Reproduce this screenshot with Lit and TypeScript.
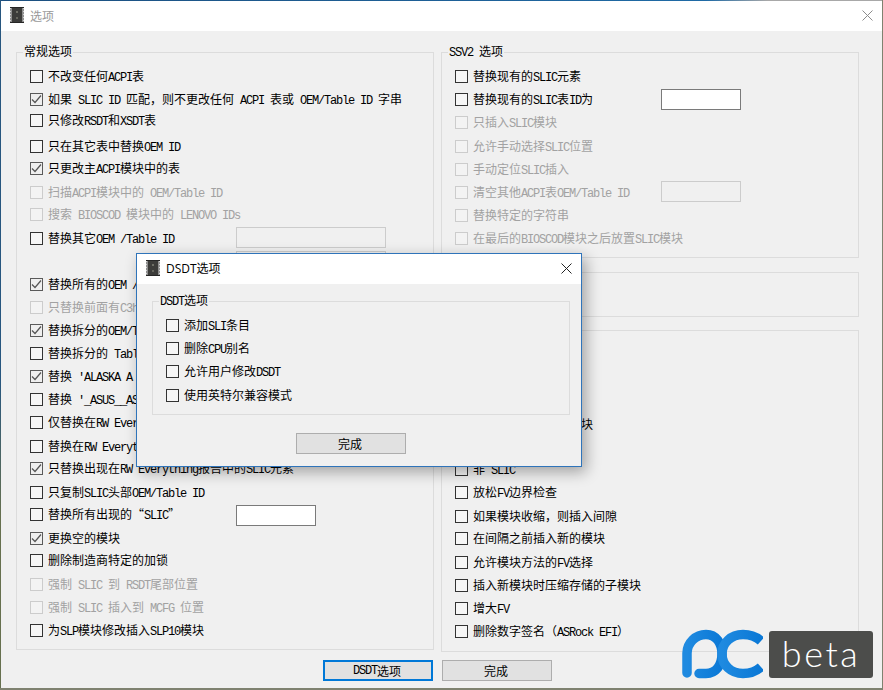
import { LitElement, html, css } from "lit";
import { customElement } from "lit/decorators.js";

type Row = { t: string; top: number; on?: boolean; off?: boolean };

const split = (s: string) =>
  s.split(/([\x20-\x7e]+)/).filter(Boolean).map((p) =>
    /^[\x20-\x7e]+$/.test(p) ? html`<span class="lat">${p}</span>` : html`<span class="cjk">${p}</span>`
  );

const LEFT: Row[] = [
  { t: "不改变任何ACPI表", top: 70 },
  { t: "如果 SLIC ID 匹配，则不更改任何 ACPI 表或 OEM/Table ID 字串", top: 93, on: true },
  { t: "只修改RSDT和XSDT表", top: 114 },
  { t: "只在其它表中替换OEM ID", top: 140 },
  { t: "只更改主ACPI模块中的表", top: 162, on: true },
  { t: "扫描ACPI模块中的 OEM/Table ID", top: 186, off: true },
  { t: "搜索 BIOSCOD 模块中的 LENOVO IDs", top: 208, off: true },
  { t: "替换其它OEM /Table ID", top: 232 },
  { t: "替换所有的OEM /", top: 278, on: true },
  { t: "只替换前面有C3h", top: 301, off: true },
  { t: "替换拆分的OEM/T", top: 324, on: true },
  { t: "替换拆分的 Tabl", top: 347 },
  { t: "替换 'ALASKA A", top: 370, on: true },
  { t: "替换 '_ASUS__AS", top: 393 },
  { t: "仅替换在RW Ever", top: 416 },
  { t: "替换在RW Everyt", top: 440 },
  { t: "只替换出现在RW Everything报告中的SLIC元素", top: 462, on: true },
  { t: "只复制SLIC头部OEM/Table ID", top: 486 },
  { t: "替换所有出现的“SLIC”", top: 508 },
  { t: "更换空的模块", top: 532, on: true },
  { t: "删除制造商特定的加锁", top: 554 },
  { t: "强制 SLIC 到 RSDT尾部位置", top: 578, off: true },
  { t: "强制 SLIC 插入到 MCFG 位置", top: 601, off: true },
  { t: "为SLP模块修改插入SLP10模块", top: 624 },
];

const RIGHT_A: Row[] = [
  { t: "替换现有的SLIC元素", top: 70 },
  { t: "替换现有的SLIC表ID为", top: 93 },
  { t: "只插入SLIC模块", top: 116, off: true },
  { t: "允许手动选择SLIC位置", top: 140, off: true },
  { t: "手动定位SLIC插入", top: 163, off: true },
  { t: "清空其他ACPI表OEM/Table ID", top: 186, off: true },
  { t: "替换特定的字符串", top: 209, off: true },
  { t: "在最后的BIOSCOD模块之后放置SLIC模块", top: 232, off: true },
];

const RIGHT_C: Row[] = [
  { t: "保留压缩存储的子模块", top: 418 },
  { t: "非 SLIC", top: 463 },
  { t: "放松FV边界检查", top: 486 },
  { t: "如果模块收缩，则插入间隙", top: 510 },
  { t: "在间隔之前插入新的模块", top: 532 },
  { t: "允许模块方法的FV选择", top: 556 },
  { t: "插入新模块时压缩存储的子模块", top: 579 },
  { t: "增大FV", top: 602 },
  { t: "删除数字签名（ASRock EFI）", top: 625 },
];

const DLG: Row[] = [
  { t: "添加SLI条目", top: 319 },
  { t: "删除CPU别名", top: 342 },
  { t: "允许用户修改DSDT", top: 365 },
  { t: "使用英特尔兼容模式", top: 389 },
];

const chip = () => html`<svg class="chip" width="16" height="16" viewBox="0 0 16 16" aria-hidden="true">
  <rect x="1" y="0" width="14" height="16" fill="#262626"/>
  <rect x="1" y="1" width="2" height="14" fill="#8f8f8f"/>
  <rect x="13" y="1" width="2" height="14" fill="#8f8f8f"/>
  <path d="M1.500 1v14M14.500 1v14" stroke="#d4d4d4" stroke-width="1" stroke-dasharray="1 2"/>
  <rect x="3" y="1" width="10" height="14" fill="#3c3c3a"/>
  <rect x="7" y="4" width="2" height="2" fill="#6f6f66"/>
  <rect x="7" y="10" width="2" height="2" fill="#66665e"/>
</svg>`;

const x = (c: string) => html`<svg width="11" height="11" viewBox="0 0 11 11" aria-hidden="true">
  <path d="M.5.5l10 10M10.500.5l-10 10" fill="none" stroke="${c}" stroke-width="1"/>
</svg>`;

@customElement("app-root")
export class AppRoot extends LitElement {
  static styles = css`
    :host {
      display: block;
      width: 883px;
      height: 690px;
      overflow: hidden;
      background: #7f8270;
      font-family: "Noto Sans CJK SC", "Liberation Mono", monospace;
      font-size: 12px;
      color: #000;
    }
    .win {
      position: relative;
      width: 882px;
      height: 688px;
      box-sizing: border-box;
      background: #f0f0f0;
      border-left: 1px solid #27567f;
      border-image: linear-gradient(#27567f 55%, #66704f 75%) 1;
      overflow: hidden;
      display: flex;
      flex-direction: column;
    }
    .topline {
      height: 1px;
      flex: none;
      background: linear-gradient(90deg, #1c4f7f, #1f6aa5 80%, #a8a8a8 87%);
    }
    .bar {
      flex: none;
      height: 30px;
      box-sizing: border-box;
      background: #fff;
      display: flex;
      align-items: center;
      padding: 0 9px 2px 8px;
      gap: 5px;
      color: #999;
      font-size: 12px;
    }
    .grow { flex: 1; }
    .chip { flex: none; }
    .group {
      position: absolute;
      box-sizing: border-box;
      border: 1px solid #dcdcdc;
    }
    .legend {
      position: absolute;
      top: -9px;
      left: 6px;
      background: #f0f0f0;
      padding: 0 1px;
      line-height: 14px;
      height: 14px;
      white-space: pre;
    }
    .row {
      position: absolute;
      display: flex;
      align-items: center;
      gap: 5px;
      height: 13px;
      white-space: pre;
    }
    .row .txt { margin-bottom: 2px; }
    .off { color: #a2a2a2; }
    .box {
      flex: none;
      width: 13px;
      height: 13px;
      box-sizing: border-box;
      border: 1px solid #333;
      background: #f6f6f6;
      display: block;
    }
    .box.on { border-color: #5a5a5a; background: #efefef; }
    .off .box { border-color: #ccc; background: #f3f3f3; }
    .check { display: block; }
    .lat {
      font-family: "Liberation Mono", monospace;
      font-size: 12px;
      letter-spacing: -1.2px;
    }
    .field {
      position: absolute;
      box-sizing: border-box;
      border: 1px solid #7a7a7a;
      background: #fff;
    }
    .field.dis { border-color: #ccc; background: #f0f0f0; }
    .btn {
      position: absolute;
      box-sizing: border-box;
      width: 110px;
      height: 21px;
      padding-right: 2px;
      border: 1px solid #adadad;
      background: #e1e1e1;
      display: flex;
      align-items: center;
      justify-content: center;
      white-space: pre;
    }
    .btn.focus { border: 2px solid #0078d7; }
    .dlg {
      position: absolute;
      left: 135px;
      top: 253px;
      width: 446px;
      height: 214px;
      box-sizing: border-box;
      border: 1px solid #2f74ba;
      background: #f0f0f0;
      box-shadow: 4px 5px 14px rgba(0, 0, 0, 0.33);
      display: flex;
      flex-direction: column;
    }
    .dbar {
      flex: none;
      height: 30px;
      box-sizing: border-box;
      background: #fff;
      display: flex;
      align-items: center;
      padding: 0 9px 2px 8px;
      gap: 5px;
      font-family: "Open Sans", "Noto Sans CJK SC", sans-serif;
      color: #000;
    }
    .wm {
      position: absolute;
      left: 680px;
      top: 628px;
      display: flex;
      gap: 6px;
      align-items: flex-start;
    }
    .beta {
      width: 104px;
      height: 47px;
      margin-top: 3px;
      background: #4c4d4b;
      border-radius: 3px;
      color: #fff;
      font-family: Lato, "Open Sans", sans-serif;
      font-weight: 300;
      font-size: 36px;
      line-height: 44px;
      letter-spacing: 2.500px;
      text-align: center;
    }
  `;

  private row(r: Row, left: number, offY = 0) {
    return html`<div class="row ${r.off ? "off" : ""}" style="left:${left}px;top:${r.top - offY}px">
      <span class="box ${r.on ? "on" : ""}">${r.on
        ? html`<svg class="check" width="11" height="11" viewBox="0 0 11 11" aria-hidden="true"><path d="M1 5.500l3 3 6-7" fill="none" stroke="#555" stroke-width="1.200"/></svg>`
        : ""}</span>
      <span class="txt">${split(r.t)}</span>
    </div>`;
  }

  private group(l: number, t: number, w: number, h: number, title = "") {
    return html`<div class="group" style="left:${l - 1}px;top:${t}px;width:${w}px;height:${h}px">
      ${title ? html`<span class="legend">${split(title)}</span>` : ""}
    </div>`;
  }

  private field(l: number, t: number, w: number, dis = false) {
    return html`<div class="field ${dis ? "dis" : ""}" style="left:${l - 1}px;top:${t}px;width:${w}px;height:21px"></div>`;
  }

  private btn(l: number, t: number, label: string, focus = false) {
    return html`<div class="btn ${focus ? "focus" : ""}" style="left:${l}px;top:${t}px">${split(label)}</div>`;
  }

  render() {
    return html`<div class="win">
      <div class="topline"></div>
      <div class="bar">
        ${chip()}<span>选项</span><span class="grow"></span>${x("#8c8c8c")}
      </div>
      ${this.group(16, 52, 418, 598, "常规选项")}
      ${this.group(441, 52, 418, 206, "SSV2 选项")}
      ${this.group(441, 272, 418, 45)}
      ${this.group(441, 330, 418, 322)}
      ${LEFT.map((r) => this.row(r, 29))}
      ${RIGHT_A.map((r) => this.row(r, 454))}
      ${RIGHT_C.map((r) => this.row(r, 454))}
      ${this.field(236, 227, 150, true)}
      ${this.field(236, 251, 150, true)}
      ${this.field(236, 505, 80)}
      ${this.field(661, 89, 80)}
      ${this.field(661, 181, 80, true)}
      ${this.btn(322, 660, "DSDT选项", true)}
      ${this.btn(441, 660, "完成")}

      <div class="dlg">
        <div class="dbar">
          ${chip()}<span>DSDT选项</span><span class="grow"></span>${x("#222")}
        </div>
        ${this.group(16, 47, 418, 114, "DSDT选项")}
        ${DLG.map((r) => this.row(r, 29, 254))}
        ${this.btn(159, 179, "完成")}
      </div>

      <div class="wm">
        <svg width="82" height="52" viewBox="0 0 82 52" aria-hidden="true">
          <defs>
            <linearGradient id="pcg" x1="0" x2="1" y1="0" y2="0">
              <stop offset="0" stop-color="#1f8ae0"/>
              <stop offset="1" stop-color="#0a78d6"/>
            </linearGradient>
          </defs>
          <path d="M6 45V25A19 19 0 0 1 25 6.500C35 6.500 41 15 41 26S35 45.500 25 45.500H18" fill="none" stroke="url(#pcg)" stroke-width="9.500" stroke-linecap="round"/>
          <path d="M80 13C75 8.500 69 6.500 62 6.500C50 6.500 41 15 41 26S50 45.500 62 45.500C69 45.500 75 43.500 80 39" fill="none" stroke="url(#pcg)" stroke-width="9.500"/>
        </svg>
        <div class="beta">beta</div>
      </div>
    </div>`;
  }
}
